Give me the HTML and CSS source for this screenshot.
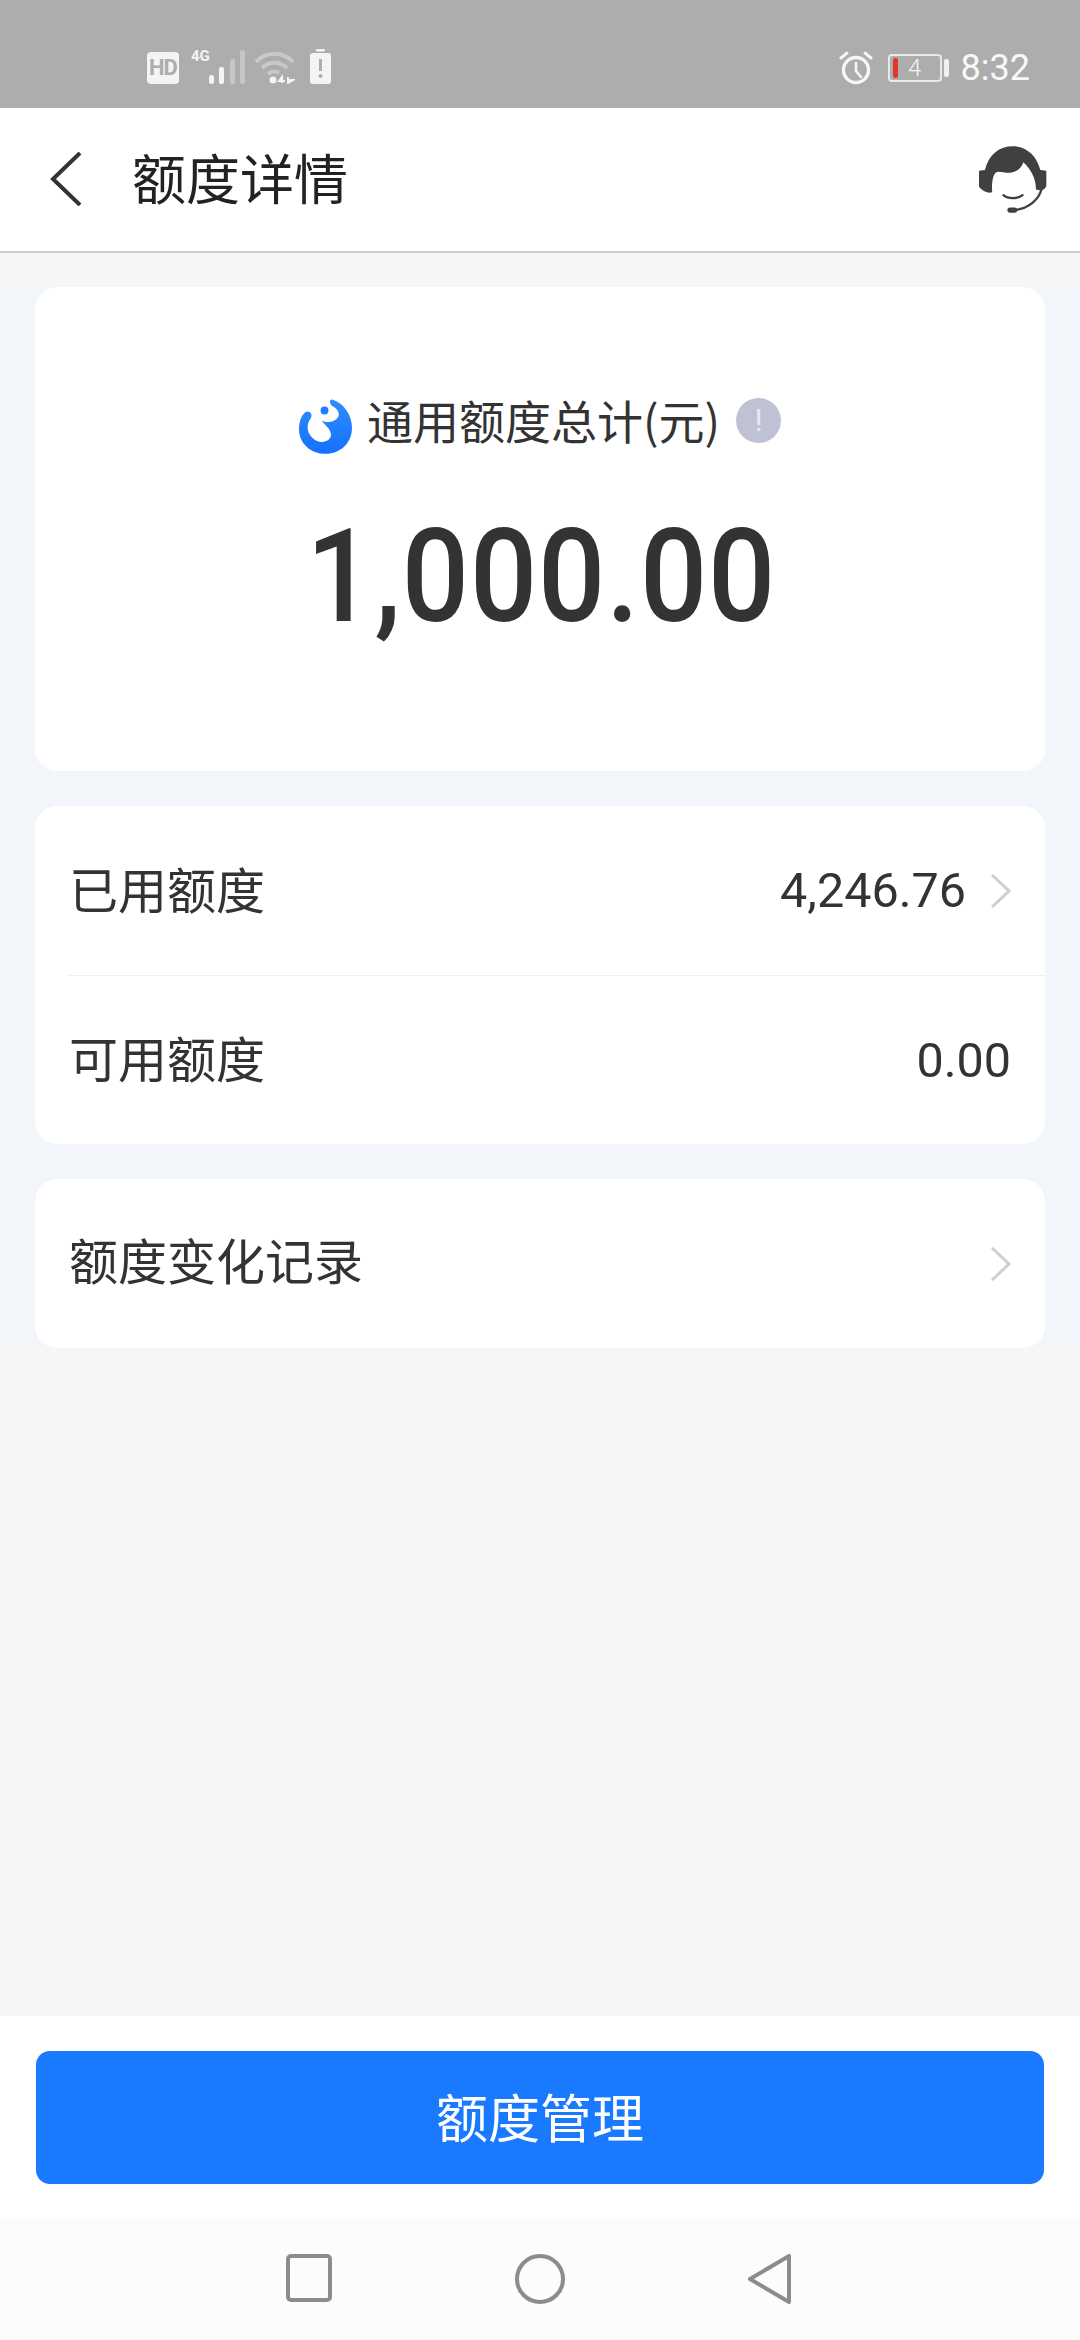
FILE: index.html
```html
<!DOCTYPE html>
<html lang="zh-CN">
<head>
    <meta charset="UTF-8">
    <meta name="viewport" content="width=device-width, initial-scale=1.0">
    <title>额度详情</title>
    <link rel="stylesheet" href="styles.css">
</head>
<body>

    <div class="status-bar">
        <div class="status-left">
            <span class="hd-tile">HD</span>
            <div class="signal">
                <span class="signal-label">4G</span>
                <svg class="signal-bars" width="37" height="34" viewBox="0 0 37 34">
                    <rect x="0" y="25" width="5" height="9" rx="2.5" fill="#f4f4f4"/>
                    <rect x="10" y="17" width="5" height="17" rx="2" fill="#f4f4f4"/>
                    <rect x="21" y="9" width="5" height="25" rx="2" fill="#c6c6c6"/>
                    <rect x="31" y="0" width="5" height="34" rx="2" fill="#c6c6c6"/>
                </svg>
            </div>
            <svg class="wifi" width="41" height="33" viewBox="0 0 41 33" fill="none" stroke="#c8c8c8" stroke-width="4">
                <path d="M2 11 C12 0 29 0 39 11"/>
                <path d="M8 17 C15 10 26 10 33 17"/>
                <path d="M14 23 C17 20 22 20 25 22"/>
                <circle cx="19" cy="29" r="3.5" fill="#f4f4f4" stroke="none"/>
                <path d="M28 32 L28 26 L25 30 L31 30" stroke="#f4f4f4" stroke-width="2"/>
                <path d="M34 26 L34 32 L39 29 L34 29" stroke="#f4f4f4" stroke-width="2"/>
            </svg>
            <svg class="saver" width="21" height="35" viewBox="0 0 21 35">
                <rect x="6" y="0" width="9" height="2.5" rx="1" fill="#f4f4f4"/>
                <rect x="0" y="4" width="21" height="31" rx="3" fill="#f4f4f4"/>
                <rect x="9" y="10" width="3" height="12" fill="#adadad"/>
                <circle cx="10.5" cy="27" r="2" fill="#adadad"/>
            </svg>
        </div>
        <div class="status-right">
            <svg class="alarm" width="34" height="34" viewBox="0 0 34 34" fill="none" stroke="#f6f6f6" stroke-linecap="round">
                <circle cx="17" cy="19" r="12.5" stroke-width="3.4"/>
                <path d="M17 12 L17 20 L22 26" stroke-width="2.6"/>
                <path d="M2 7 L8 2" stroke-width="3"/>
                <path d="M32 7 L26 2" stroke-width="3"/>
            </svg>
            <div class="battery">
                <div class="battery-body">
                    <span class="battery-level"></span>
                    <span class="battery-num">4</span>
                </div>
                <span class="battery-nub"></span>
            </div>
            <span class="clock">8:32</span>
        </div>
    </div>

    <div class="header">
        <svg class="back" width="32" height="54" viewBox="0 0 32 54" fill="none" stroke="#333" stroke-width="4">
            <path d="M30 1 L3 27 L30 53"/>
        </svg>
        <h1 class="title">额度详情</h1>
        <svg class="agent" width="70" height="72" viewBox="47 44 212 218">
            <path fill="#404040" d="M50 122 L68 120 C80 72 112 48 152 48 C192 48 224 74 236 120 L254 122 L254 168 C250 180 236 184 222 178 C224 150 210 120 184 96 C180 112 165 126 145 128 C125 130 110 120 100 128 C92 136 88 160 90 186 C84 192 60 186 50 170 Z"/>
            <path fill="none" stroke="#404040" stroke-width="7" stroke-linecap="round" d="M124 196 C138 208 166 208 182 196"/>
            <path fill="none" stroke="#404040" stroke-width="7" d="M240 176 C232 210 200 236 160 241"/>
            <rect x="136" y="233" width="30" height="16" rx="8" fill="#404040"/>
        </svg>
    </div>

    <div class="content">
        <div class="card total-card">
            <div class="total-label">
                <svg class="brand" width="53" height="56" viewBox="0 0 160 168">
                    <defs>
                        <linearGradient id="brandFill" x1="0" y1="0" x2="0" y2="1">
                            <stop offset="0" stop-color="#2f8dff"/>
                            <stop offset="1" stop-color="#1670ff"/>
                        </linearGradient>
                    </defs>
                    <path fill="url(#brandFill)" d="M100 4 C135 15 160 50 160 90 C160 135 125 168 80 168 C35 168 0 135 0 95 C0 70 8 50 20 42 C32 36 42 48 36 60 C27 72 24 85 27 97 C32 118 52 134 72 132 C90 130 99 118 96 106 C93 92 84 86 68 68 C88 76 106 72 116 60 C126 48 118 34 104 26 C92 20 90 2 100 4 Z"/>
                    <circle cx="77" cy="37" r="12" fill="#1f7bff"/>
                </svg>
                <span class="total-text">通用额度总计(元)</span>
                <span class="info-dot">!</span>
            </div>
            <div class="total-amount">1,000.00</div>
        </div>

        <div class="card">
            <div class="row row-line">
                <span class="row-label">已用额度</span>
                <span class="row-value">4,246.76</span>
                <svg class="chevron" width="20" height="34" viewBox="0 0 20 34" fill="none" stroke="#cfcfcf" stroke-width="3">
                    <path d="M1 1 L18 17 L1 33"/>
                </svg>
            </div>
            <div class="row">
                <span class="row-label">可用额度</span>
                <span class="row-value">0.00</span>
            </div>
        </div>

        <div class="card">
            <div class="row row-tall">
                <span class="row-label">额度变化记录</span>
                <svg class="chevron" width="20" height="34" viewBox="0 0 20 34" fill="none" stroke="#cfcfcf" stroke-width="3">
                    <path d="M1 1 L18 17 L1 33"/>
                </svg>
            </div>
        </div>
    </div>

    <div class="filler"></div>

    <div class="footer">
        <button class="btn">额度管理</button>
    </div>

    <div class="nav-bar">
        <svg width="46" height="48" viewBox="0 0 46 48" fill="none" stroke="#8c8c8c" stroke-width="4">
            <rect x="2" y="2" width="42" height="44" rx="3"/>
        </svg>
        <svg width="50" height="50" viewBox="0 0 50 50" fill="none" stroke="#8c8c8c" stroke-width="4">
            <circle cx="25" cy="25" r="23"/>
        </svg>
        <svg width="44" height="50" viewBox="0 0 44 50" fill="none" stroke="#8c8c8c" stroke-width="4" stroke-linejoin="round">
            <path d="M41 2 L41 48 L2 25 Z"/>
        </svg>
    </div>

</body>
</html>
```

FILE: styles.css
```css
body {
    font-family: "Noto Sans CJK SC", "Noto Sans", sans-serif;
    background-color: #f6f6f6;
    color: #333;
    margin: 0;
    height: 2340px;
    display: flex;
    flex-direction: column;
    overflow: hidden;
}

.status-bar {
    height: 108px;
    flex-shrink: 0;
    background-color: #adadad;
    display: flex;
    justify-content: space-between;
    align-items: flex-end;
    padding: 0 50px 22px 147px;
    box-sizing: border-box;
}

.status-left {
    display: flex;
    align-items: flex-end;
    margin-bottom: 2px;
}

.hd-tile {
    width: 32px;
    height: 32px;
    background-color: #f4f4f4;
    border-radius: 4px;
    color: #adadad;
    font-family: "Roboto", sans-serif;
    font-weight: 700;
    font-size: 22px;
    line-height: 32px;
    text-align: center;
    letter-spacing: -1px;
}

.signal {
    margin-left: 12px;
    position: relative;
    padding-left: 18px;
}

.signal-label {
    position: absolute;
    left: 0;
    top: -1px;
    color: #f4f4f4;
    font-family: "Roboto", sans-serif;
    font-weight: 700;
    font-size: 15px;
    line-height: 14px;
}

.signal-bars {
    display: block;
}

.wifi {
    display: block;
    margin-left: 8px;
}

.saver {
    display: block;
    margin-left: 15px;
}

.status-right {
    display: flex;
    align-items: center;
}

.alarm {
    display: block;
}

.battery {
    display: flex;
    align-items: center;
    margin-left: 15px;
}

.battery-body {
    width: 54px;
    height: 28px;
    border: 2px solid #e8e8e8;
    border-radius: 4px;
    box-sizing: border-box;
    display: flex;
    align-items: center;
    justify-content: center;
    position: relative;
}

.battery-level {
    position: absolute;
    left: 3px;
    top: 2px;
    bottom: 2px;
    width: 5px;
    border-radius: 2px;
    background-color: #e0362c;
}

.battery-num {
    color: #f4f4f4;
    font-family: "Roboto", sans-serif;
    font-size: 24px;
    font-weight: 300;
    line-height: 24px;
}

.battery-nub {
    width: 5px;
    height: 18px;
    margin-left: 2px;
    border-radius: 2px;
    background-color: #f0f0f0;
}

.clock {
    margin-left: 12px;
    color: #f8f8f8;
    font-family: "Roboto", sans-serif;
    font-size: 36px;
    line-height: 36px;
}

.header {
    height: 145px;
    flex-shrink: 0;
    background-color: #fff;
    border-bottom: 2px solid #cdcdcd;
    box-sizing: border-box;
    display: flex;
    align-items: center;
    padding: 0 32px 0 50px;
}

.back {
    display: block;
    margin-bottom: 2px;
}

.title {
    margin: 0 0 6px 50px;
    flex: 1;
    font-size: 54px;
    font-weight: 400;
    line-height: 72px;
    color: #222;
}

.agent {
    display: block;
    margin-top: 2px;
}

.content {
    flex-shrink: 0;
    background-color: #f2f5fa;
    margin-top: 34px;
    padding: 0 35px;
    height: 1061px;
    box-sizing: border-box;
    display: flex;
    flex-direction: column;
    gap: 35px;
}

.card {
    background-color: #fff;
    border-radius: 22px;
}

.total-card {
    height: 485px;
    padding-top: 99px;
    box-sizing: border-box;
    display: flex;
    flex-direction: column;
    align-items: center;
}

.total-label {
    display: flex;
    align-items: flex-start;
    height: 68px;
}

.brand {
    display: block;
    margin-top: 12px;
}

.total-text {
    margin-left: 15px;
    font-size: 46px;
    line-height: 66px;
}

.info-dot {
    width: 45px;
    height: 45px;
    margin: 12px 0 0 16px;
    border-radius: 50%;
    background-color: #bfc2d4;
    color: #e8e9f0;
    font-family: "Roboto", sans-serif;
    font-size: 32px;
    line-height: 45px;
    text-align: center;
}

.total-amount {
    margin: 48px 0 0 3px;
    font-family: "Roboto", sans-serif;
    font-weight: 500;
    font-size: 130px;
    line-height: 150px;
    letter-spacing: 1px;
    color: #333;
    transform: scaleX(0.91);
}

.row {
    height: 168px;
    margin-left: 34px;
    padding-right: 34px;
    display: flex;
    align-items: center;
}

.row-line {
    height: 169px;
    border-bottom: 1px solid #efefef;
}

.row-tall {
    height: 169px;
}

.row-label {
    flex: 1;
    margin-bottom: 7px;
    font-size: 49px;
    color: #333;
}

.row-tall .row-label {
    margin-bottom: 11px;
}

.row-value {
    font-family: "Roboto", sans-serif;
    font-size: 48.5px;
    color: #333;
}

.chevron {
    display: block;
    flex-shrink: 0;
}

.row-value + .chevron {
    margin-left: 25px;
}

.filler {
    flex: 1;
}

.footer {
    height: 202px;
    flex-shrink: 0;
    background-color: #fff;
    padding: 35px 36px 0;
    box-sizing: border-box;
}

.btn {
    display: block;
    width: 100%;
    height: 133px;
    padding: 0 0 5px;
    background-color: #1a7aff;
    color: #fff;
    border: none;
    border-radius: 14px;
    font-family: "Noto Sans CJK SC", sans-serif;
    font-size: 52px;
}

.nav-bar {
    height: 122px;
    flex-shrink: 0;
    background-color: #fcfcfc;
    display: flex;
    align-items: flex-start;
    padding: 36px 0 0 286px;
    box-sizing: border-box;
    gap: 183px;
}

.nav-bar svg {
    display: block;
}
```
